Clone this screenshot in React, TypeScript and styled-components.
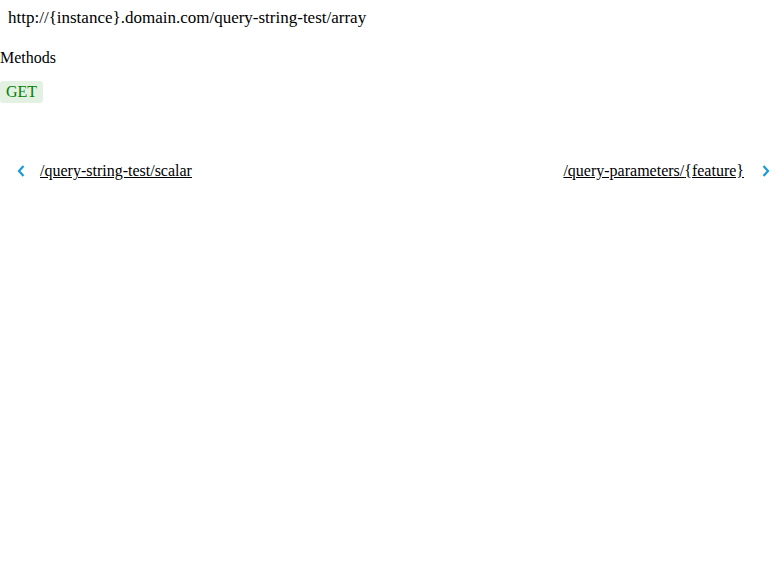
import React from "react";
import styled, { createGlobalStyle } from "styled-components";

const Global = createGlobalStyle`
  body { margin: 0; font-family: "Liberation Serif", "Times New Roman", serif; font-size: 16px; color: #000; background: #fff; }
`;

const Page = styled.div`
  display: flex;
  flex-direction: column;
`;

const Url = styled.div`
  padding: 8px 8px 0 8px;
  font-size: 17px;
  line-height: 20px;
`;

const Section = styled.div`
  margin-top: 21px;
`;

const Label = styled.div`
  line-height: 18px;
`;

const Badges = styled.div`
  display: flex;
  margin-top: 14px;
`;

const Badge = styled.span`
  background: #e2f1e2;
  color: #008000;
  border-radius: 3px;
  padding: 2px 6px 2px;
  line-height: 18px;
`;

const Nav = styled.nav`
  display: flex;
  justify-content: space-between;
  align-items: center;
  margin-top: 59px;
  padding: 0 14px 0 17px;
`;

const NavLink = styled.a<{ $gap: number }>`
  display: flex;
  align-items: center;
  gap: ${(p) => p.$gap}px;
  color: #000;
  text-decoration: underline;
  line-height: 18px;
`;

const Chevron = ({ dir }: { dir: "left" | "right" }) => (
  <svg width="8" height="12" viewBox="0 0 8 12">
    <path
      d={dir === "left" ? "M6.5 1 L2 6 L6.5 11" : "M1.5 1 L6 6 L1.5 11"}
      fill="none"
      stroke="#1a9ad6"
      strokeWidth="2.2"
    />
  </svg>
);

export default function App() {
  return (
    <Page>
      <Global />
      <Url>http://{"{instance}"}.domain.com/query-string-test/array</Url>
      <Section>
        <Label>Methods</Label>
        <Badges>
          <Badge>GET</Badge>
        </Badges>
      </Section>
      <Nav>
        <NavLink href="#" $gap={15}>
          <Chevron dir="left" />
          <span>/query-string-test/scalar</span>
        </NavLink>
        <NavLink href="#" $gap={18}>
          <span>/query-parameters/{"{feature}"} </span>
          <Chevron dir="right" />
        </NavLink>
      </Nav>
    </Page>
  );
}
